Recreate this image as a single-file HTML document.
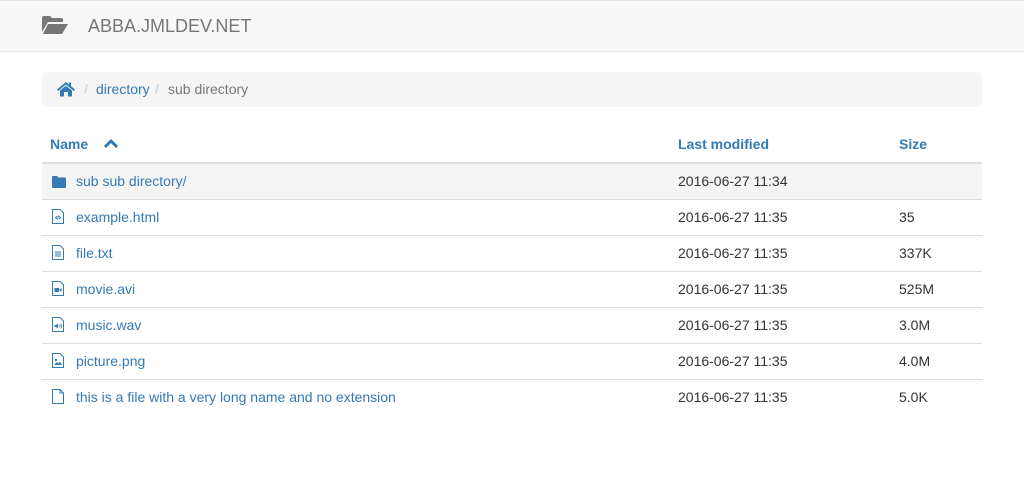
<!DOCTYPE html>
<html><head><meta charset="utf-8"><style>
*{box-sizing:border-box}
body{margin:0;font-family:"Liberation Sans",sans-serif;font-size:14px;color:#333;background:#fff}
.nav{height:52px;background:#f8f8f8;border-bottom:1px solid #e7e7e7;border-top:1px solid #e7e7e7;position:relative}
.nav svg{position:absolute;left:42px;top:15px}
.nav .t{position:absolute;left:88px;top:15px;font-size:18px;color:#777}
.bc{position:absolute;left:42px;top:72px;width:940px;height:35px;background:#f5f5f5;border-radius:4px}
.bc svg{position:absolute;left:15px;top:9px}
.bc span{position:absolute;top:9px}
a{color:#337ab7;text-decoration:none}
table{position:absolute;left:42px;top:126px;width:940px;border-collapse:collapse}
th{text-align:left;color:#337ab7;font-weight:bold;height:37px;padding:0 8px;border-bottom:2px solid #ddd}
td{height:36px;padding:0 8px;border-top:1px solid #ddd;vertical-align:middle}
tr.f td{border-top:none;background:#f5f5f5}
td.n{padding-left:10px}
td.n svg{vertical-align:-2px;margin-right:12px}
tr.f td.n svg{margin-right:10px}
</style></head><body>
<div class="nav">
<svg width="26" height="18" viewBox="0 0 26 18"><path d="M0 2Q0 0 2 0H8L10 2H19Q21 2 21 4V6H6L0 16Z" fill="#777"/><path d="M6 8H26L20 18H1Z" fill="#777"/></svg>
<span class="t">ABBA.JMLDEV.NET</span></div>
<div class="bc">
<svg width="18" height="16" viewBox="0 0 18 16"><path d="M9 1L0 8.5 1.2 10 9 3.5 16.8 10 18 8.5 14 5.2V1.5H12V3.5Z" fill="#337ab7"/><path d="M3 9.5L9 4.7 15 9.5V15.5H11V11H7V15.5H3Z" fill="#337ab7"/></svg>
<span style="left:42px;color:#ccc">/</span><span style="left:54px"><a>directory</a></span><span style="left:113px;color:#ccc">/</span><span style="left:126px;color:#777">sub directory</span></div>
<table>
<tr><th style="width:628px">Name <svg width="14" height="10" viewBox="0 0 14 10" style="margin-left:12px;vertical-align:0"><path d="M1 8L7 2 13 8" stroke="#337ab7" stroke-width="3" fill="none"/></svg></th><th style="width:221px">Last modified</th><th>Size</th></tr>
<tr class="f"><td class="n"><svg width="14" height="12" viewBox="0 0 14 12"><path d="M0 1Q0 0 1 0H5L6.5 1.5H13Q14 1.5 14 2.5V11Q14 12 13 12H1Q0 12 0 11Z" fill="#337ab7"/></svg><a>sub sub directory/</a></td><td>2016-06-27 11:34</td><td></td></tr>
<tr><td class="n"><svg width="12" height="15" viewBox="0 0 12 15"><path d="M.5.5H8L11.5 4V14.5H.5Z" fill="none" stroke="#337ab7"/><path d="M5 7L3.5 8.5 5 10M7 7L8.5 8.5 7 10M6.5 6.5L5.5 10.5" stroke="#337ab7" fill="none" stroke-width=".9"/></svg><a>example.html</a></td><td>2016-06-27 11:35</td><td>35</td></tr>
<tr><td class="n"><svg width="12" height="15" viewBox="0 0 12 15"><path d="M.5.5H8L11.5 4V14.5H.5Z" fill="none" stroke="#337ab7"/><path d="M3 7H9M3 9H9M3 11H9" stroke="#337ab7"/></svg><a>file.txt</a></td><td>2016-06-27 11:35</td><td>337K</td></tr>
<tr><td class="n"><svg width="12" height="15" viewBox="0 0 12 15"><path d="M.5.5H8L11.5 4V14.5H.5Z" fill="none" stroke="#337ab7"/><path d="M2.5 7H7V11H2.5ZM7 9L9.5 7V11Z" fill="#337ab7"/></svg><a>movie.avi</a></td><td>2016-06-27 11:35</td><td>525M</td></tr>
<tr><td class="n"><svg width="12" height="15" viewBox="0 0 12 15"><path d="M.5.5H8L11.5 4V14.5H.5Z" fill="none" stroke="#337ab7"/><path d="M2.5 8H4L6 6.5V11.5L4 10H2.5Z" fill="#337ab7"/><path d="M7.5 7.5Q8.5 9 7.5 10.5M8.8 6.8Q10.3 9 8.8 11.2" stroke="#337ab7" fill="none" stroke-width=".8"/></svg><a>music.wav</a></td><td>2016-06-27 11:35</td><td>3.0M</td></tr>
<tr><td class="n"><svg width="12" height="15" viewBox="0 0 12 15"><path d="M.5.5H8L11.5 4V14.5H.5Z" fill="none" stroke="#337ab7"/><circle cx="4" cy="7" r="1.2" fill="#337ab7"/><path d="M2 12L5 9 6.5 10.5 8 8.5 10 12Z" fill="#337ab7"/></svg><a>picture.png</a></td><td>2016-06-27 11:35</td><td>4.0M</td></tr>
<tr><td class="n"><svg width="12" height="15" viewBox="0 0 12 15"><path d="M.5.5H8L11.5 4V14.5H.5ZM8 .5V4H11.5" fill="none" stroke="#337ab7"/></svg><a>this is a file with a very long name and no extension</a></td><td>2016-06-27 11:35</td><td>5.0K</td></tr>
</table>
</body></html>
